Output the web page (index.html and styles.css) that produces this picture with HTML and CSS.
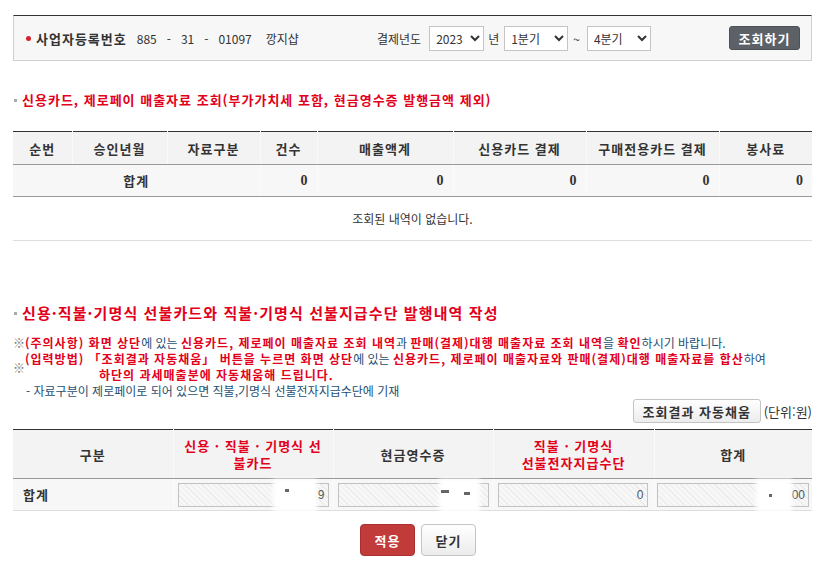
FILE: index.html
```html
<!DOCTYPE html>
<html lang="ko">
<head>
<meta charset="utf-8">
<title>신용카드 매출자료 조회</title>
<link rel="stylesheet" href="styles.css">
</head>
<body>
<div class="page">
  <div class="searchbar">
    <div class="grp">
      <span class="star"></span>
      <span class="lbl">사업자등록번호</span>
      <span class="bizno"><span>885</span><span>-</span><span>31</span><span>-</span><span>01097</span></span>
      <span class="shop">깡지샵</span>
    </div>
    <div class="grp">
      <span class="txt">결제년도</span>
      <select class="sel sel-year"><option>2023</option></select>
      <span class="txt yr">년</span>
      <select class="sel sel-q sel-q1"><option>1분기</option></select>
      <span class="txt tilde">~</span>
      <select class="sel sel-q sel-q2"><option>4분기</option></select>
    </div>
    <button class="btn-dark">조회하기</button>
  </div>

  <h2 class="sec-title t1">신용카드, 제로페이 매출자료 조회(부가가치세 포함, 현금영수증 발행금액 제외)</h2>

  <table class="grid g1">
    <colgroup>
      <col class="w59"><col class="w95"><col class="w93"><col class="w57"><col class="w136"><col class="w133"><col class="w133"><col class="w93">
    </colgroup>
    <thead>
      <tr>
        <th>순번</th><th>승인년월</th><th>자료구분</th><th>건수</th><th>매출액계</th><th>신용카드 결제</th><th>구매전용카드 결제</th><th>봉사료</th>
      </tr>
    </thead>
    <tbody>
      <tr class="sum">
        <td colspan="3" class="center">합계</td><td class="num">0</td><td class="num">0</td><td class="num">0</td><td class="num">0</td><td class="num">0</td>
      </tr>
      <tr class="empty">
        <td colspan="8">조회된 내역이 없습니다.</td>
      </tr>
    </tbody>
  </table>

  <h2 class="sec-title t2">신용·직불·기명식 선불카드와 직불·기명식 선불지급수단 발행내역 작성</h2>

  <div class="notes">
    <div class="note">
      <span class="mark">※</span>
      <div><b>(주의사항) 화면 상단</b>에 있는 <b>신용카드, 제로페이 매출자료 조회 내역</b>과 <b>판매(결제)대행 매출자료 조회 내역</b>을 <b>확인</b>하시기 바랍니다.</div>
    </div>
    <div class="note note2">
      <span class="mark mark2">※</span>
      <div>
        <div><b>(입력방법) 「조회결과 자동채움」 버튼을 누르면 화면 상단</b>에 있는 <b>신용카드, 제로페이 매출자료와 판매(결제)대행 매출자료를 합산</b>하여</div>
        <div class="indent"><b>하단의 과세매출분에 자동채움해 드립니다.</b></div>
      </div>
    </div>
    <div class="note sub">- 자료구분이 제로페이로 되어 있으면 직불,기명식 선불전자지급수단에 기재</div>
  </div>

  <div class="autofill">
    <button class="btn-light btn-fill">조회결과 자동채움</button>
    <span class="unit">(단위:원)</span>
  </div>

  <table class="grid g2">
    <colgroup>
      <col class="w160"><col class="w160"><col class="w160"><col class="w161"><col class="w158">
    </colgroup>
    <thead>
      <tr>
        <th>구분</th>
        <th class="red">신용 · 직불 · 기명식 선<br>불카드</th>
        <th>현금영수증</th>
        <th class="red">직불 · 기명식<br>선불전자지급수단</th>
        <th>합계</th>
      </tr>
    </thead>
    <tbody>
      <tr class="inrow">
        <td class="rowhead">합계</td>
        <td class="cell"><div class="inp">9</div><span class="blot blot-a"></span><span class="speck speck-a"></span></td>
        <td class="cell"><div class="inp"></div><span class="blot blot-b"></span><span class="speck speck-b1"></span><span class="speck speck-b2"></span></td>
        <td class="cell cell-4"><div class="inp">0</div></td>
        <td class="cell cell-5"><div class="inp">00</div><span class="blot blot-c"></span><span class="speck speck-c"></span></td>
      </tr>
    </tbody>
  </table>

  <div class="actions">
    <button class="btn-red">적용</button>
    <button class="btn-light btn-close">닫기</button>
  </div>
</div>
</body>
</html>
```

FILE: styles.css
```css
* { box-sizing: border-box; }

body {
  margin: 0;
  background: #fff;
  color: #333;
  font-family: "Noto Sans CJK KR", "Noto Sans", sans-serif;
  font-size: 12px;
}

.page {
  width: 799px;
  margin-left: 13px;
  padding-top: 15px;
}

/* search bar */
.searchbar {
  height: 46px;
  border: 1px solid #cfcfcf;
  border-top: 1px solid #333;
  background: #f7f7f7;
  display: flex;
  align-items: center;
  justify-content: space-between;
  padding: 0 11px 0 12px;
}

.grp { display: flex; align-items: center; }

.star {
  width: 5px;
  height: 5px;
  background: #d8202f;
  border-radius: 50%;
  margin-right: 5px;
}

.lbl {
  font-size: 13px;
  font-weight: bold;
  letter-spacing: 1px;
  color: #333;
  margin-right: 10px;
}

.bizno { display: flex; gap: 10px; color: #333; }

.shop { margin-left: 14px; }

.txt { color: #333; font-size: 12px; }

.yr { margin-left: 4px; }
.tilde { margin-left: 5px; }

.sel {
  height: 25px;
  border: 1px solid #c4c4c4;
  background: #fff;
  color: #333;
  font-family: "Noto Sans CJK KR", sans-serif;
  font-size: 12px;
  padding: 0 2px;
  margin: 0;
  border-radius: 0;
}

.sel-year { width: 55px; margin-left: 8px; }
.sel-q { width: 64px; }
.sel-q1 { margin-left: 5px; }
.sel-q2 { margin-left: 7px; }

.btn-dark {
  width: 71px;
  height: 24px;
  border: 1px solid #4d5157;
  border-radius: 3px;
  background: #5c6168;
  color: #fff;
  font-family: "Noto Sans CJK KR", sans-serif;
  font-size: 13px;
  font-weight: bold;
  letter-spacing: 1px;
  padding: 0;
}

/* section titles */
.sec-title {
  display: flex;
  align-items: center;
  margin: 0;
  color: #e3001b;
  font-weight: bold;
  line-height: 18px;
}

.sec-title::before {
  content: "";
  width: 3px;
  height: 3px;
  background: #aaa;
  margin: 0 5px 0 1px;
  flex: none;
}

.t1 { font-size: 13px; letter-spacing: 1px; margin: 30px 0 22px; }
.t2 { font-size: 15px; letter-spacing: 1.1px; line-height: 20px; margin-top: 62px; }

/* grids */
.grid {
  width: 799px;
  border-collapse: collapse;
  table-layout: fixed;
  border-top: 1px solid #333;
}

.w59 { width: 59px; }
.w95 { width: 95px; }
.w93 { width: 93px; }
.w57 { width: 57px; }
.w136 { width: 136px; }
.w133 { width: 133px; }
.w160 { width: 160px; }
.w161 { width: 161px; }
.w158 { width: 158px; }

.grid th {
  background: #f3f3f3;
  color: #333;
  font-size: 13px;
  font-weight: bold;
  letter-spacing: 1px;
  border-left: 1px solid #fafafa;
  border-bottom: 1px solid #9a9a9a;
  padding: 0;
}

.grid th:first-child { border-left: none; }

.g1 th { height: 33px; }

.g1 .sum td {
  height: 32px;
  background: #f7f7f7;
  border-left: 1px solid #fbfbfb;
  border-bottom: 1px solid #9a9a9a;
  font-weight: bold;
  font-size: 13px;
  letter-spacing: 1px;
}

.g1 .sum td:first-child { border-left: none; }

.center { text-align: center; }

.g1 .sum td.num {
  text-align: right;
  padding-right: 9px;
  font-family: "Liberation Serif", serif;
  font-size: 14px;
  letter-spacing: 0;
}

.empty td {
  height: 44px;
  text-align: center;
  border-bottom: 1px solid #dedede;
  color: #333;
}

/* notes */
.notes {
  margin-top: 12px;
  line-height: 16px;
  font-size: 12px;
  color: #1d4f73;
}

.note { display: flex; }
.note b { color: #e3001b; letter-spacing: 1px; }
.note2 { align-items: center; }

.mark {
  width: 12px;
  flex: none;
  color: #777;
}

.mark2 { margin-top: 2px; }

.indent { padding-left: 74px; }

.sub { padding-left: 13px; }

/* autofill */
.autofill {
  display: flex;
  justify-content: flex-end;
  align-items: center;
  height: 24px;
}

.btn-light {
  border: 1px solid #c4c4c4;
  border-radius: 3px;
  background: linear-gradient(#ffffff, #ececec);
  color: #333;
  font-family: "Noto Sans CJK KR", sans-serif;
  font-size: 13px;
  font-weight: bold;
  letter-spacing: 1px;
  padding: 0;
}

.btn-fill { width: 128px; height: 24px; }

.unit { margin-left: 3px; color: #333; font-size: 13px; }

/* grid 2 */
.g2 { margin-top: 6px; }

.g2 th { height: 49px; line-height: 17px; }

.g2 th.red { color: #e3001b; }

.inrow td {
  height: 32px;
  background: #f7f7f7;
  border-bottom: 1px solid #dedede;
  border-left: 1px solid #fbfbfb;
}

.inrow td:first-child { border-left: none; }

.rowhead {
  font-size: 13px;
  font-weight: bold;
  letter-spacing: 1px;
  padding-left: 10px;
  color: #333;
}

.cell { position: relative; padding: 0 4px; }
.cell-4 { padding-right: 6px; }
.cell-5 { padding: 0 3px 0 2px; }

.inp {
  height: 24px;
  border: 1px solid #c2c2c2;
  background: repeating-linear-gradient(45deg, #f7f7f7 0 3px, #ebebeb 3px 4px);
  text-align: right;
  padding-right: 3px;
  font-family: "Liberation Sans", sans-serif;
  font-size: 12px;
  line-height: 22px;
  color: #555;
}

.blot {
  position: absolute;
  top: 0;
  height: 33px;
  background: #fff;
  filter: blur(2px);
}

.blot-a { left: 99px; width: 44px; }
.blot-b { left: 105px; width: 41px; }
.blot-c { left: 101px; width: 36px; }

.speck {
  position: absolute;
  background: #666;
  filter: blur(0.6px);
  height: 3px;
}

.speck-a { left: 111px; top: 10px; width: 4px; }
.speck-b1 { left: 107px; top: 11px; width: 8px; }
.speck-b2 { left: 130px; top: 13px; width: 6px; }
.speck-c { left: 114px; top: 15px; width: 3px; }

/* actions */
.actions {
  display: flex;
  justify-content: center;
  gap: 6px;
  margin-top: 13px;
  padding-left: 11px;
}

.btn-red {
  width: 55px;
  height: 32px;
  border: 1px solid #a83030;
  border-radius: 4px;
  background: #c23b3b;
  color: #fff;
  font-family: "Noto Sans CJK KR", sans-serif;
  font-size: 13px;
  font-weight: bold;
  letter-spacing: 1px;
  padding: 0;
}

.btn-close { width: 55px; height: 32px; border-radius: 4px; }
```
